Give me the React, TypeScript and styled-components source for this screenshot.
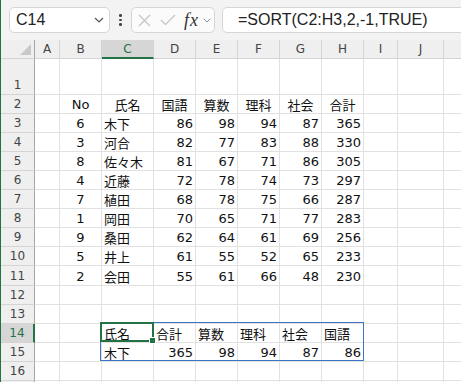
import styled, { createGlobalStyle } from 'styled-components';

const GlobalStyle = createGlobalStyle`
  html, body {
    margin: 0;
    padding: 0;
    background: #ffffff;
  }
  body {
    width: 461px;
    height: 382px;
    overflow: hidden;
  }
`;

const GREEN = '#217346';
const GRID = '#e1e1e1';
const HEAD_BG = '#efefef';
const HEAD_LINE = '#d4d4d4';
const HEAD_EDGE = '#a6a6a6';

// K only shows its left edge, so its letter stays out of view
const COLUMNS = ['A', 'B', 'C', 'D', 'E', 'F', 'G', 'H', 'I', 'J', 'K'];
const VISIBLE_LABELS = 10;
const COL_WIDTHS = [25, 42, 52, 42, 42, 42, 42, 42, 34, 46, 42];
const ROW_HEIGHTS = [36, 19, 19, 19, 19, 19, 19, 19, 19, 19, 20, 19, 19, 19, 19, 19];

type Align = 'left' | 'right' | 'center';
type CellData = { text: string; align: Align };

const scores: [number, string, number, number, number, number, number][] = [
  [6, '木下', 86, 98, 94, 87, 365],
  [3, '河合', 82, 77, 83, 88, 330],
  [8, '佐々木', 81, 67, 71, 86, 305],
  [4, '近藤', 72, 78, 74, 73, 297],
  [7, '植田', 68, 78, 75, 66, 287],
  [1, '岡田', 70, 65, 71, 77, 283],
  [9, '桑田', 62, 64, 61, 69, 256],
  [5, '井上', 61, 55, 52, 65, 233],
  [2, '会田', 55, 61, 66, 48, 230],
];

const tableHead = ['No', '氏名', '国語', '算数', '理科', '社会', '合計'];
const sortedHead = ['氏名', '合計', '算数', '理科', '社会', '国語'];
const sortedRow = ['木下', '365', '98', '94', '87', '86'];

// col index: 0 = A, 1 = B ...
const cellAt = (row: number, col: number): CellData | null => {
  if (row === 2 && col >= 1 && col <= 7) {
    return { text: tableHead[col - 1], align: 'center' };
  }
  if (row >= 3 && row <= 11 && col >= 1 && col <= 7) {
    const v = scores[row - 3][col - 1];
    if (col === 1) return { text: String(v), align: 'center' };
    if (col === 2) return { text: String(v), align: 'left' };
    return { text: String(v), align: 'right' };
  }
  if (row === 14 && col >= 2 && col <= 7) {
    return { text: sortedHead[col - 2], align: 'left' };
  }
  if (row === 15 && col >= 2 && col <= 7) {
    return { text: sortedRow[col - 2], align: col === 2 ? 'left' : 'right' };
  }
  return null;
};

const Window = styled.div`
  width: 461px;
  height: 382px;
  display: flex;
  flex-direction: column;
  border-left: 1px solid ${GREEN};
  box-sizing: border-box;
  overflow: hidden;
  background: #ffffff;
`;

const FormulaBar = styled.div`
  height: 40px;
  flex: none;
  display: flex;
  align-items: center;
  padding-left: 8px;
  background: #f3f3f3;
  overflow: hidden;
`;

const Box = styled.div`
  height: 26px;
  box-sizing: border-box;
  border: 1px solid #d6d6d6;
  border-radius: 5px;
  background: #ffffff;
  display: flex;
  align-items: center;
  flex: none;
`;

const NameBox = styled(Box)`
  width: 101px;
  padding: 0 5px 0 6px;
  justify-content: space-between;
`;

const NameText = styled.span`
  font-family: 'Liberation Sans', Arial, sans-serif;
  font-size: 16px;
  color: #222222;
`;

const Dots = styled.div`
  width: 21px;
  display: flex;
  flex-direction: column;
  align-items: center;
  gap: 2px;
  flex: none;
`;

const Dot = styled.span`
  width: 2.5px;
  height: 2.5px;
  border-radius: 50%;
  background: #444444;
`;

const EditBox = styled(Box)`
  width: 84px;
  padding-left: 6px;
  background: #fbfbfb;
`;

const IconSlot = styled.span<{ $gap: number }>`
  margin-left: ${(p) => p.$gap}px;
  display: flex;
  align-items: center;
  flex: none;
`;

const FxLabel = styled.span`
  font-family: 'Liberation Serif', 'Times New Roman', serif;
  font-style: italic;
  font-size: 18px;
  letter-spacing: 1px;
  color: #333333;
  line-height: 1;
`;

const FormulaBox = styled(Box)`
  width: 300px;
  margin-left: 7px;
  padding-left: 15px;
  border-top-right-radius: 0;
  border-bottom-right-radius: 0;
`;

const FormulaText = styled.span`
  font-family: 'Liberation Sans', Arial, sans-serif;
  font-size: 16px;
  color: #222222;
  white-space: nowrap;
`;

const Sheet = styled.div`
  flex: 1;
  display: grid;
  grid-template-columns: 34px ${COL_WIDTHS.map((w) => `${w}px`).join(' ')};
  grid-template-rows: 19px ${ROW_HEIGHTS.map((h) => `${h}px`).join(' ')} 1fr;
  font-family: 'DejaVu Sans', 'Noto Sans CJK JP', sans-serif;
  overflow: hidden;
`;

const Corner = styled.div`
  background: ${HEAD_BG};
  border-right: 1px solid ${HEAD_EDGE};
  border-bottom: 1px solid ${HEAD_LINE};
  box-sizing: border-box;
  display: flex;
  align-items: flex-end;
  justify-content: flex-end;
  padding: 0 3px 3px 0;
`;

const Header = styled.div<{ $active?: boolean }>`
  box-sizing: border-box;
  background: ${(p) => (p.$active ? '#d6d6d6' : HEAD_BG)};
  color: ${(p) => (p.$active ? GREEN : '#444444')};
  font-family: 'DejaVu Sans', sans-serif;
  font-size: 12px;
  display: flex;
  justify-content: center;
  white-space: nowrap;
`;

const ColHeader = styled(Header)`
  align-items: center;
  border-right: 1px solid ${HEAD_LINE};
  border-bottom: ${(p) => (p.$active ? `2px solid ${GREEN}` : `1px solid ${HEAD_LINE}`)};
`;

const RowHeader = styled(Header)`
  align-items: flex-end;
  padding-bottom: 2px;
  border-bottom: 1px solid ${HEAD_LINE};
  border-right: ${(p) => (p.$active ? `2px solid ${GREEN}` : `1px solid ${HEAD_EDGE}`)};
`;

const Cell = styled.div<{ $align?: Align; $anchor?: boolean }>`
  box-sizing: border-box;
  border-right: 1px solid ${GRID};
  border-bottom: 1px solid ${GRID};
  display: flex;
  align-items: center;
  justify-content: ${(p) =>
    p.$align === 'right' ? 'flex-end' : p.$align === 'center' ? 'center' : 'flex-start'};
  padding: 1px 2px 0;
  font-size: 13px;
  color: #111111;
  white-space: nowrap;
  position: ${(p) => (p.$anchor ? 'relative' : 'static')};
`;

const SpillRange = styled.div`
  position: absolute;
  left: -2px;
  top: -2px;
  width: 264px;
  height: 39px;
  box-sizing: border-box;
  border: 1px solid #3d74c6;
  z-index: 2;
  pointer-events: none;
`;

const Selection = styled.div`
  position: absolute;
  left: -2px;
  top: -2px;
  right: -1px;
  bottom: 0;
  border: 2px solid ${GREEN};
  z-index: 3;
  pointer-events: none;
`;

const FillHandle = styled.div`
  position: absolute;
  right: -4px;
  bottom: -4px;
  width: 5px;
  height: 5px;
  background: ${GREEN};
  border: 1px solid #ffffff;
`;

const Chevron = ({ size = 10, color = '#555555' }: { size?: number; color?: string }) => (
  <svg width={size} height={size * 0.6} viewBox="0 0 10 6">
    <polyline points="1,1 5,5 9,1" fill="none" stroke={color} strokeWidth="1.2" />
  </svg>
);

const RowGroup = ({ row, label }: { row: number; label: boolean }) => (
  <>
    <RowHeader $active={row === 14}>{label ? row : null}</RowHeader>
    {COLUMNS.map((c, ci) => {
      const data = cellAt(row, ci);
      const anchor = row === 14 && c === 'C';
      return (
        <Cell key={c} $align={data?.align} $anchor={anchor}>
          {data?.text}
          {anchor && (
            <>
              <SpillRange />
              <Selection>
                <FillHandle />
              </Selection>
            </>
          )}
        </Cell>
      );
    })}
  </>
);

const App = () => {
  // the 17th row only peeks in at the bottom edge, its number is out of view
  const rows = Array.from({ length: ROW_HEIGHTS.length + 1 }, (_, i) => i + 1);

  return (
    <Window>
      <GlobalStyle />
      <FormulaBar>
        <NameBox>
          <NameText>C14</NameText>
          <Chevron />
        </NameBox>
        <Dots>
          <Dot />
          <Dot />
          <Dot />
        </Dots>
        <EditBox>
          <IconSlot $gap={0}>
            <svg width="13" height="13" viewBox="0 0 13 13">
              <path d="M1 1 L12 12 M12 1 L1 12" stroke="#c4c4c4" strokeWidth="1.2" />
            </svg>
          </IconSlot>
          <IconSlot $gap={9}>
            <svg width="16" height="12" viewBox="0 0 16 12">
              <polyline points="1,6 5.5,10.5 15,1" fill="none" stroke="#c4c4c4" strokeWidth="1.2" />
            </svg>
          </IconSlot>
          <IconSlot $gap={8}>
            <FxLabel>fx</FxLabel>
          </IconSlot>
          <IconSlot $gap={4}>
            <Chevron size={8} color="#8a8a8a" />
          </IconSlot>
        </EditBox>
        <FormulaBox>
          <FormulaText>=SORT(C2:H3,2,-1,TRUE)</FormulaText>
        </FormulaBox>
      </FormulaBar>

      <Sheet>
        <Corner>
          <svg width="11" height="11" viewBox="0 0 11 11">
            <polygon points="11,0 11,11 0,11" fill="#c8c8c8" />
          </svg>
        </Corner>
        {COLUMNS.map((c, ci) => (
          <ColHeader key={c} $active={c === 'C'}>
            {ci < VISIBLE_LABELS ? c : null}
          </ColHeader>
        ))}

        {rows.map((r) => (
          <RowGroup key={r} row={r} label={r <= ROW_HEIGHTS.length} />
        ))}
      </Sheet>
    </Window>
  );
};

export default App;
